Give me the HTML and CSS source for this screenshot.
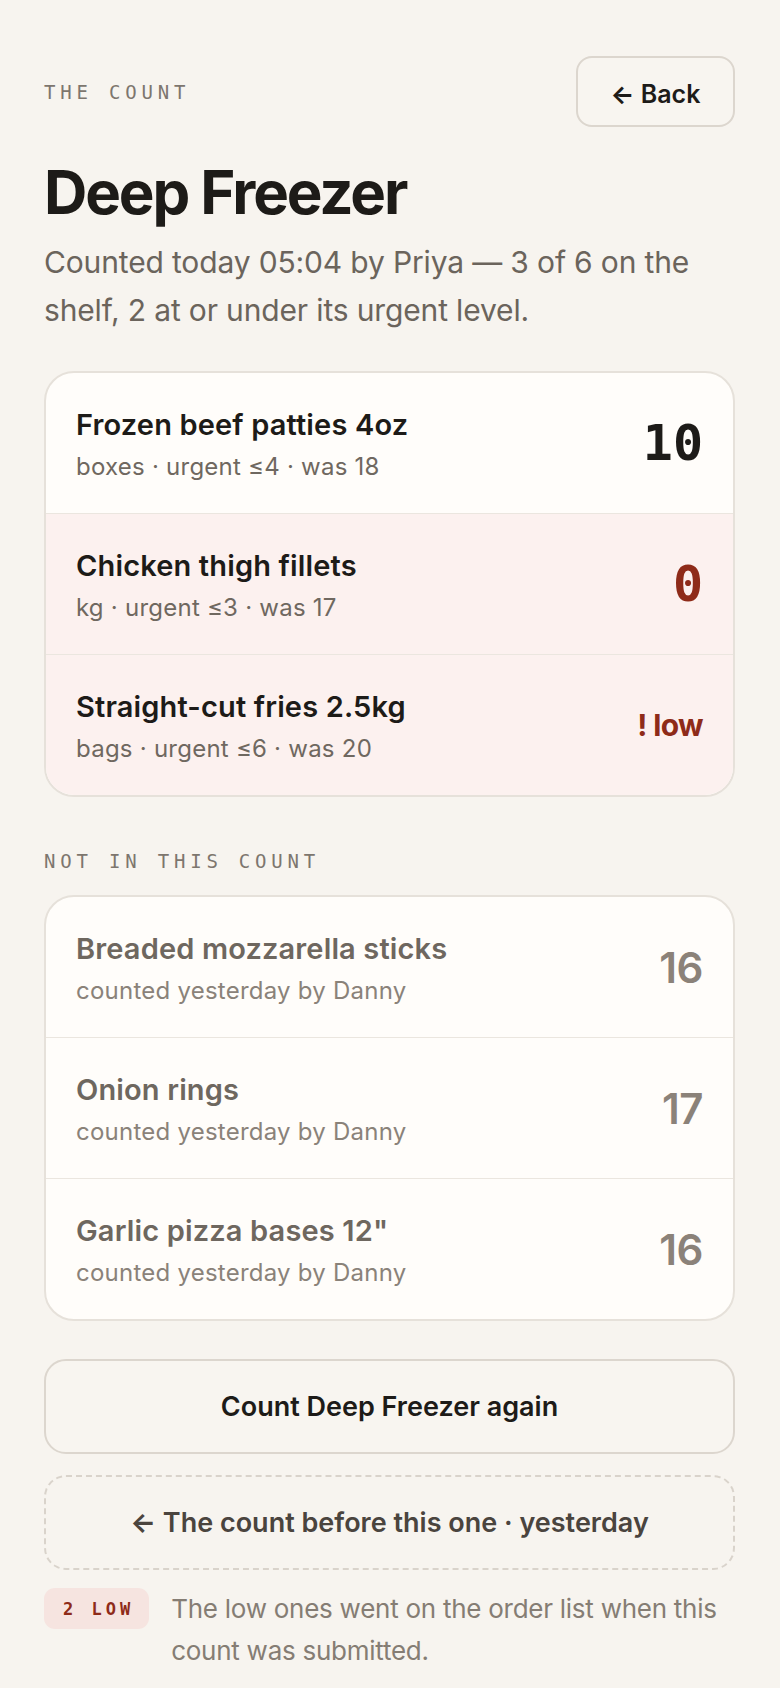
FILE: index.html
```html
<!DOCTYPE html>
<html lang="en">
<head>
<meta charset="utf-8">
<title>Deep Freezer — The Count</title>
<link rel="stylesheet" href="styles.css">
</head>
<body>
<main class="page">
  <header class="top">
    <span class="eyebrow">THE COUNT</span>
    <button class="back"><span class="arrow">&larr;</span> Back</button>
  </header>

  <h1 class="title">Deep Freezer</h1>
  <p class="lede">Counted today 05:04 by Priya — 3 of 6 on the shelf, 2 at or under its urgent level.</p>

  <section class="card">
    <div class="row">
      <div class="info">
        <div class="name">Frozen beef patties 4oz</div>
        <div class="meta">boxes · urgent ≤4 · was 18</div>
      </div>
      <div class="qty">10</div>
    </div>
    <div class="row alert">
      <div class="info">
        <div class="name">Chicken thigh fillets</div>
        <div class="meta">kg · urgent ≤3 · was 17</div>
      </div>
      <div class="qty red">0</div>
    </div>
    <div class="row alert">
      <div class="info">
        <div class="name">Straight-cut fries 2.5kg</div>
        <div class="meta">bags · urgent ≤6 · was 20</div>
      </div>
      <div class="low">! low</div>
    </div>
  </section>

  <div class="eyebrow section-label">NOT IN THIS COUNT</div>

  <section class="card muted">
    <div class="row">
      <div class="info">
        <div class="name">Breaded mozzarella sticks</div>
        <div class="meta">counted yesterday by Danny</div>
      </div>
      <div class="qty-old">16</div>
    </div>
    <div class="row">
      <div class="info">
        <div class="name">Onion rings</div>
        <div class="meta">counted yesterday by Danny</div>
      </div>
      <div class="qty-old">17</div>
    </div>
    <div class="row">
      <div class="info">
        <div class="name">Garlic pizza bases 12"</div>
        <div class="meta">counted yesterday by Danny</div>
      </div>
      <div class="qty-old">16</div>
    </div>
  </section>

  <button class="btn primary">Count Deep Freezer again</button>
  <button class="btn dashed"><span class="arrow">&larr;</span> The count before this one · yesterday</button>

  <div class="note">
    <span class="badge">2 LOW</span>
    <p class="note-text">The low ones went on the order list when this count was submitted.</p>
  </div>
</main>
</body>
</html>
```

FILE: styles.css
```css
* { box-sizing: border-box; }

html, body {
  margin: 0;
  padding: 0;
  background: #f7f4ef;
}

body {
  font-family: Inter, "Noto Sans", "Liberation Sans", sans-serif;
  color: #1d1b18;
}

.page {
  padding: 56px 45px 40px 44px;
  display: flex;
  flex-direction: column;
}

.top {
  display: flex;
  justify-content: space-between;
  align-items: center;
}

.eyebrow {
  font-family: "DejaVu Sans Mono", "Liberation Mono", monospace;
  font-size: 19px;
  letter-spacing: 4.8px;
  color: #7d766e;
}

.back {
  width: 159px;
  height: 71px;
  border: 2px solid #dcd6ce;
  border-radius: 16px;
  background: #f8f5f0;
  font-family: Inter, "Noto Sans", sans-serif;
  font-weight: 600;
  font-size: 25px;
  letter-spacing: 0;
  color: #1d1b18;
  padding: 4px 0 0;
}

.arrow {
  font-weight: 700;
}

.title {
  margin: 32px 0 0;
  font-size: 60px;
  line-height: 66px;
  font-weight: 700;
  letter-spacing: -0.035em;
  color: #1d1b18;
}

.lede {
  margin: 13px 0 0;
  font-size: 30px;
  line-height: 48px;
  letter-spacing: -0.005em;
  color: #6b645c;
}

.card {
  margin-top: 37px;
  background: #fffdfa;
  border: 2px solid #e6e1da;
  border-radius: 30px;
  overflow: hidden;
}

.row {
  display: flex;
  justify-content: space-between;
  align-items: center;
  padding: 34px 30px 30px 30px;
  height: 141px;
  border-top: 1px solid #ebe6df;
}

.row:first-child {
  border-top: none;
  height: 140px;
}

.row.alert {
  background: #fcf1ef;
}

.info {
  display: flex;
  flex-direction: column;
  gap: 8px;
}

.name {
  font-size: 29px;
  line-height: 36px;
  font-weight: 600;
  letter-spacing: 0.005em;
  color: #1d1b18;
}

.meta {
  font-size: 24px;
  line-height: 32px;
  letter-spacing: 0.01em;
  color: #6f6860;
}

.qty {
  font-family: "DejaVu Sans Mono", "Liberation Mono", monospace;
  font-weight: 700;
  font-size: 50px;
  line-height: 1;
  color: #1d1b18;
  margin-top: -4px;
}

.qty.red {
  color: #8e2b19;
}

.low {
  font-size: 30px;
  font-weight: 700;
  letter-spacing: -0.02em;
  color: #8e2b19;
  margin-top: -4px;
}

.muted .name {
  color: #6e675f;
}

.muted .meta {
  color: #8a8279;
}

.qty-old {
  font-size: 42px;
  font-weight: 600;
  letter-spacing: -0.01em;
  color: #8b8279;
  margin-top: -4px;
}

.section-label {
  margin-top: 52px;
  line-height: 24px;
}

.section-label + .card {
  margin-top: 22px;
}

.btn {
  width: 100%;
  height: 95px;
  border-radius: 22px;
  font-family: Inter, "Noto Sans", sans-serif;
  font-weight: 600;
  font-size: 27px;
  letter-spacing: 0;
  padding: 0;
}

.btn.primary {
  margin-top: 38px;
  background: #f8f5f0;
  border: 2px solid #dcd6ce;
  color: #1d1b18;
}

.btn.dashed {
  margin-top: 21px;
  background: transparent;
  border: 2px dashed #d9d3cb;
  color: #4a443e;
}

.note {
  margin-top: 18px;
  display: flex;
  align-items: flex-start;
  gap: 22px;
}

.badge {
  flex: none;
  height: 41px;
  padding: 0 15px 0 19px;
  display: flex;
  align-items: center;
  background: #f6e4e0;
  border-radius: 11px;
  font-family: "DejaVu Sans Mono", "Liberation Mono", monospace;
  font-weight: 700;
  font-size: 17px;
  letter-spacing: 4px;
  color: #8e2b19;
}

.note-text {
  margin: 0;
  font-size: 26px;
  line-height: 42px;
  letter-spacing: -0.01em;
  color: #857d74;
}
```
